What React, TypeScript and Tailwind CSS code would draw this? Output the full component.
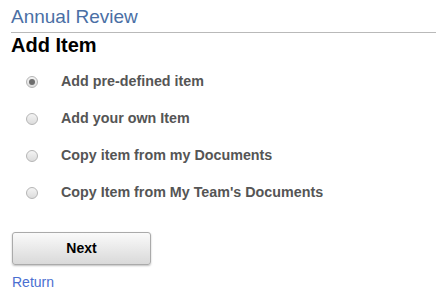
import { useState } from "react";

const options = [
  "Add pre-defined item",
  "Add your own Item",
  "Copy item from my Documents",
  "Copy Item from My Team's Documents",
];

// Small grey radio dot, styled like the legacy form controls
function Radio({ checked }: { checked: boolean }) {
  return (
    <span className="w-[12px] h-[12px] rounded-full border border-[#b5b5b5] bg-gradient-to-b from-[#f4f4f4] to-[#dcdcdc] flex items-center justify-center shrink-0">
      {checked && <span className="w-[6px] h-[6px] rounded-full bg-[#6d6d6d]" />}
    </span>
  );
}

export default function App() {
  const [selected, setSelected] = useState(0);

  return (
    <div className="w-[436px] h-[304px] bg-white font-['Liberation_Sans',Arial,sans-serif] pl-[11px] pt-[5px]">
      {/* Header */}
      <div className="border-b border-[#b9b9b9] pb-[4px]">
        <h1 className="text-[19px] leading-[23px] text-[#4a6fa5]">Annual Review</h1>
      </div>
      <h2 className="text-[20px] leading-[24px] font-bold text-black">Add Item</h2>

      {/* Options */}
      <div className="flex flex-col mt-[6px] ml-[15px]">
        {options.map((label, i) => (
          <label
            key={label}
            onClick={() => setSelected(i)}
            className="flex items-center gap-[23px] h-[37px] cursor-pointer"
          >
            <Radio checked={selected === i} />
            <span className="text-[14.3px] font-bold text-[#555555]">{label}</span>
          </label>
        ))}
      </div>

      {/* Actions */}
      <button className="mt-[21px] ml-[1px] w-[139px] h-[33px] rounded-[3px] border border-[#aaaaaa] bg-gradient-to-b from-[#fafafa] to-[#d9d9d9] shadow-[0_1px_2px_rgba(0,0,0,0.25)] text-[14px] font-bold text-black">
        Next
      </button>
      <div className="mt-[5px] ml-[1px]">
        <a href="#" className="text-[14px] text-[#4a6fd1]">
          Return
        </a>
      </div>
    </div>
  );
}
